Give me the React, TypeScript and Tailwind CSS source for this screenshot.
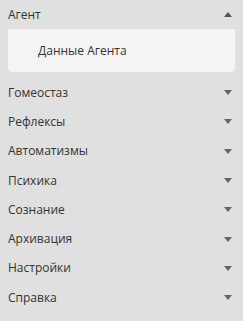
import React from 'react'

const ITEMS = ['Гомеостаз', 'Рефлексы', 'Автоматизмы', 'Психика', 'Сознание', 'Архивация', 'Настройки', 'Справка']

function Caret({ up }: { up?: boolean }) {
  return (
    <svg width="8" height="5" viewBox="0 0 8 5" className="shrink-0">
      {up ? <path d="M0 5 L4 0 L8 5 Z" fill="#555" /> : <path d="M0 0 L8 0 L4 5 Z" fill="#666" />}
    </svg>
  )
}

export default function App() {
  return (
    <div
      className="w-[243px] h-[321px] bg-[#e0e0e0] text-[12px] text-[#333]"
      style={{ fontFamily: '"Open Sans", sans-serif' }}
    >
      <div className="px-2">
        <div className="flex items-center justify-between h-[29px] pr-[3px]">
          <span>Агент</span>
          <Caret up />
        </div>
        <div className="bg-[#f4f4f4] rounded-b-[4px] h-[43px] flex items-center pl-[30px]">
          Данные Агента
        </div>
        <div className="mt-[6px] flex flex-col">
          {ITEMS.map((it) => (
            <div key={it} className="flex items-center justify-between h-[29.3px] pr-[3px]">
              <span>{it}</span>
              <Caret />
            </div>
          ))}
        </div>
      </div>
    </div>
  )
}
